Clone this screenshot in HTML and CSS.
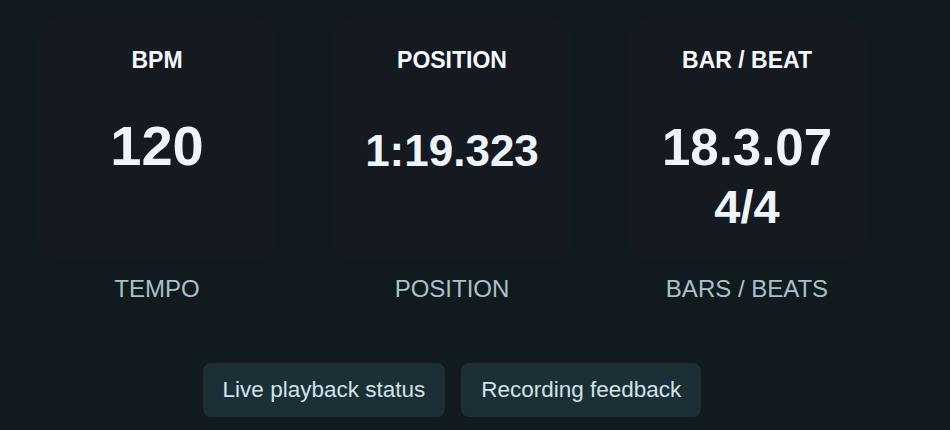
FILE: index.html
```html
<!DOCTYPE html>
<html lang="en">
  <head>
    <meta charset="UTF-8" />
    <meta name="viewport" content="width=device-width, initial-scale=1.0" />
    <title>Transport</title>
    <link rel="stylesheet" href="styles.css">
  </head>
  <body>
    <div class="transport">
      <div class="readouts">
        <div class="readout">
          <div class="readout-card">
            <h2 class="readout-title">BPM</h2>
            <div class="readout-value value-bpm">120</div>
          </div>
          <div class="readout-label">TEMPO</div>
        </div>
        <div class="readout">
          <div class="readout-card">
            <h2 class="readout-title">POSITION</h2>
            <div class="readout-value value-time">1:19.323</div>
          </div>
          <div class="readout-label">POSITION</div>
        </div>
        <div class="readout">
          <div class="readout-card">
            <h2 class="readout-title">BAR / BEAT</h2>
            <div class="readout-value value-bar">18.3.07</div>
            <div class="readout-value value-sig">4/4</div>
          </div>
          <div class="readout-label">BARS / BEATS</div>
        </div>
      </div>

      <div class="status-row">
        <button class="button status-button">Live playback status</button>
        <button class="button status-button">Recording feedback</button>
      </div>
    </div>
  </body>
</html>
```

FILE: styles.css
```css
body {
  margin: 0;
  background: #111a1f;
  font-family: 'Liberation Sans', Arial, sans-serif;
  height: 100vh;
}

.transport {
  width: 830px;
  margin-left: 37px;
  padding-top: 18px;
}

.readouts {
  display: grid;
  grid-template-columns: repeat(3, 240px);
  column-gap: 55px;
}

.readout {
  display: flex;
  flex-direction: column;
  align-items: center;
}

.readout-card {
  box-sizing: border-box;
  width: 100%;
  height: 242px;
  padding-top: 29px;
  background: #151a21;
  border-radius: 20px;
  text-align: center;
}

.readout-title {
  margin: 0;
  font-size: 23px;
  line-height: 26px;
  font-weight: bold;
  color: #f5f8fc;
}

.readout-value {
  font-weight: bold;
  color: #eef4fb;
}

.value-bpm {
  margin-top: 42px;
  font-size: 56px;
  line-height: 62px;
}

.value-time {
  margin-top: 53px;
  font-size: 44px;
  line-height: 50px;
}

.value-bar {
  margin-top: 45px;
  font-size: 51px;
  line-height: 60px;
}

.value-sig {
  font-size: 47px;
  line-height: 60px;
  margin-top: -1px;
}

.readout-label {
  margin-top: 15px;
  font-size: 24px;
  line-height: 28px;
  color: #a9c1c9;
}

.status-row {
  display: flex;
  justify-content: center;
  gap: 16px;
  margin-top: 60px;
}

.button {
  border: none;
  border-radius: 8px;
  cursor: pointer;
  font-family: inherit;
}

.button:hover {
  filter: brightness(1.1);
}

.status-button {
  padding: 14px 20px;
  background: #1c2f37;
  color: #cfe3e8;
  font-size: 22.5px;
  line-height: 26px;
}
```
